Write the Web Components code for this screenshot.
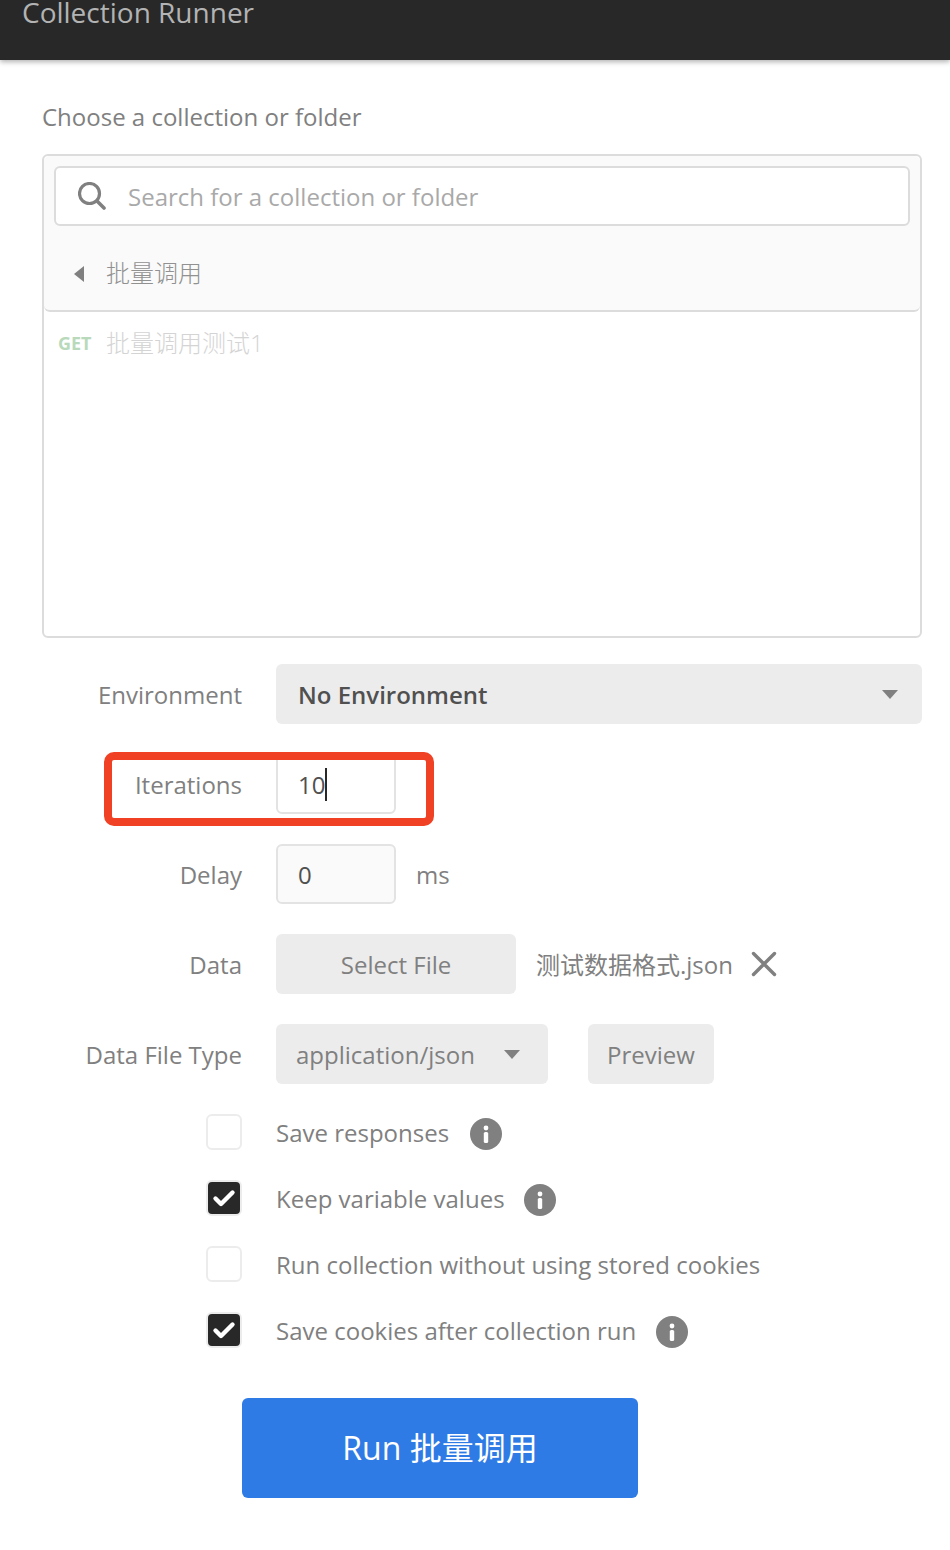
<!DOCTYPE html>
<html>
<head>
<meta charset="utf-8">
<title>Collection Runner</title>
<style>
  html, body { margin: 0; background: #fff; }
  body {
    font-family: 'Open Sans', 'Noto Sans CJK SC', sans-serif;
    font-size: 24px;
    color: #808080;
  }
  .content { display: block; padding: 0 28px 0 42px; }
</style>
</head>
<body>
<app-header>Collection Runner</app-header>
<div class="content">
  <collection-picker title-text="Choose a collection or folder" placeholder="Search for a collection or folder" folder="批量调用"></collection-picker>
  <runner-form></runner-form>
</div>

<script>
const INFO_ICON = `<svg width="32" height="32" viewBox="0 0 32 32"><circle cx="16" cy="16" r="16" fill="#808080"/><circle cx="16" cy="10" r="2.4" fill="#fff"/><rect x="13.8" y="14" width="4.4" height="11" rx="1.6" fill="#fff"/></svg>`;
const CHECK_ICON = `<svg width="24" height="24" viewBox="0 0 24 24"><path d="M3.5 12.5l5.5 5.5L20.5 6.5" fill="none" stroke="#fff" stroke-width="4.4" stroke-linecap="round" stroke-linejoin="round"/></svg>`;

class AppHeader extends HTMLElement {
  constructor() {
    super();
    const shadow = this.attachShadow({ mode: 'open' });
    shadow.innerHTML = `
      <style>
        :host {
          display: block;
          height: 60px;
          overflow: hidden;
          background: #282828;
          color: #b3b3b3;
          box-shadow: 0 2px 5px rgba(0, 0, 0, 0.3);
          position: relative;
          font-size: 28px;
          line-height: 24px;
          padding-left: 22px;
        }
      </style>
      <slot></slot>`;
  }
}
customElements.define('app-header', AppHeader);

class CollectionPicker extends HTMLElement {
  constructor() {
    super();
    const shadow = this.attachShadow({ mode: 'open' });
    shadow.innerHTML = `
      <style>
        :host { display: block; }
        .title { height: 34px; line-height: 34px; margin: 40px 0 20px; color: #808080; }
        .box {
          height: 480px;
          border: 2px solid #dcdcdc;
          border-radius: 6px;
        }
        .top {
          box-sizing: border-box;
          height: 156px;
          padding: 10px;
          background: #fafafa;
          border-bottom: 2px solid #dcdcdc;
          border-radius: 6px 6px 6px 6px;
        }
        .search {
          box-sizing: border-box;
          height: 60px;
          display: flex;
          align-items: center;
          gap: 22px;
          padding-left: 22px;
          background: #fff;
          border: 2px solid #dcdcdc;
          border-radius: 6px;
          color: #a9a9a9;
        }
        .folder {
          display: flex;
          align-items: center;
          height: 96px;
          padding-left: 20px;
          gap: 22px;
          color: #919191;
          font-weight: 300;
        }
        .folder-name { margin-bottom: 6px; }
        .arrow {
          width: 0; height: 0;
          border-style: solid;
          border-width: 8px 10px 8px 0;
          border-color: transparent #808080 transparent transparent;
        }
        .request {
          display: flex;
          align-items: center;
          height: 62px;
          padding-left: 14px;
          gap: 14px;
          color: #d4d4d4;
          font-weight: 300;
        }
        .request-name { margin-bottom: 4px; }
        .method { color: #b9d9bb; font-size: 18px; font-weight: 700; width: 34px; }
      </style>
      <div class="title"></div>
      <div class="box">
        <div class="top">
          <div class="search">
            <svg width="28" height="28" viewBox="0 0 28 28"><circle cx="11.5" cy="11.5" r="10" fill="none" stroke="#808080" stroke-width="3.2"/><path d="M19 19l7 7" stroke="#808080" stroke-width="3.6" stroke-linecap="round"/></svg>
            <span class="placeholder"></span>
          </div>
          <div class="folder"><span class="arrow"></span><span class="folder-name"></span></div>
        </div>
        <div class="request"><span class="method">GET</span><span class="request-name">批量调用测试1</span></div>
      </div>`;
    shadow.querySelector('.title').textContent = this.getAttribute('title-text');
    shadow.querySelector('.placeholder').textContent = this.getAttribute('placeholder');
    shadow.querySelector('.folder-name').textContent = this.getAttribute('folder');
  }
}
customElements.define('collection-picker', CollectionPicker);

class FormRow extends HTMLElement {
  constructor() {
    super();
    const shadow = this.attachShadow({ mode: 'open' });
    shadow.innerHTML = `
      <style>
        :host {
          display: grid;
          grid-template-columns: 200px 1fr;
          column-gap: 34px;
          align-items: center;
          min-height: 60px;
        }
        .label { text-align: right; color: #808080; }
        .control { display: flex; align-items: center; min-width: 0; }
      </style>
      <div class="label"></div>
      <div class="control"><slot></slot></div>`;
    shadow.querySelector('.label').textContent = this.getAttribute('label') || '';
  }
}
customElements.define('form-row', FormRow);

class CheckRow extends HTMLElement {
  constructor() {
    super();
    const shadow = this.attachShadow({ mode: 'open' });
    const checked = this.hasAttribute('checked');
    const info = this.getAttribute('info');
    shadow.innerHTML = `
      <style>
        :host {
          display: flex;
          align-items: center;
          height: 36px;
          margin-left: 164px;
          color: #808080;
        }
        .box {
          box-sizing: border-box;
          flex: none;
          width: 36px; height: 36px;
          margin-right: 34px;
          border: 2px solid #ececec;
          border-radius: 6px;
          display: flex;
          align-items: center;
          justify-content: center;
        }
        .box.on { background: #282828; }
        .info { display: flex; margin-top: 4px; }
      </style>
      <span class="box ${checked ? 'on' : ''}">${checked ? CHECK_ICON : ''}</span>
      <span><slot></slot></span>
      ${info ? `<span class="info" style="margin-left:${info}px">${INFO_ICON}</span>` : ''}`;
  }
}
customElements.define('check-row', CheckRow);

class RunnerForm extends HTMLElement {
  constructor() {
    super();
    const shadow = this.attachShadow({ mode: 'open' });
    shadow.innerHTML = `
      <style>
        :host { display: block; margin-top: 26px; }
        .fields { display: flex; flex-direction: column; gap: 30px; }
        .grey {
          box-sizing: border-box;
          height: 60px;
          display: flex;
          align-items: center;
          background: #ececec;
          border-radius: 6px;
          color: #808080;
        }
        .env { width: 646px; padding: 0 24px 0 22px; justify-content: space-between; color: #505050; font-weight: 600; }
        .caret { width: 0; height: 0; border-style: solid; border-width: 9px 8px 0 8px; border-color: #808080 transparent transparent transparent; }
        .input {
          box-sizing: border-box;
          width: 120px; height: 60px;
          display: flex;
          align-items: center;
          padding-left: 20px;
          border: 2px solid #e3e3e3;
          border-radius: 6px;
          background: #fafafa;
          color: #505050;
        }
        .input.focus { background: #fff; }
        .cursor { width: 2px; height: 33px; background: #282828; }
        .highlight-row { position: relative; }
        .highlight {
          position: absolute;
          left: -172px; top: -2px;
          box-sizing: border-box;
          width: 330px; height: 74px;
          border: 8px solid #f04124;
          border-radius: 10px;
          pointer-events: none;
        }
        .ms { margin-left: 20px; }
        .select-file { width: 240px; justify-content: center; }
        .file-name { margin: 0 0 2px 20px; white-space: nowrap; }
        .close { display: flex; margin-left: 18px; }
        .type { width: 272px; padding: 0 28px 0 20px; justify-content: space-between; }
        .preview { width: 126px; margin-left: 40px; justify-content: center; }
        .options { display: flex; flex-direction: column; gap: 30px; margin-top: 30px; }
        .run {
          box-sizing: border-box;
          display: flex;
          align-items: center;
          justify-content: center;
          width: 396px; height: 100px;
          margin: 50px 0 0 200px;
          padding-bottom: 4px;
          background: #2f7be6;
          border-radius: 6px;
          color: #fff;
          font-size: 32px;
        }
      </style>
      <div class="fields">
        <form-row label="Environment"><div class="grey env"><span>No Environment</span><span class="caret"></span></div></form-row>
        <form-row label="Iterations"><div class="highlight-row"><div class="input focus"><span>10</span><span class="cursor"></span></div><div class="highlight"></div></div></form-row>
        <form-row label="Delay"><div class="input">0</div><span class="ms">ms</span></form-row>
        <form-row label="Data">
          <div class="grey select-file">Select File</div>
          <span class="file-name">测试数据格式.json</span>
          <span class="close"><svg width="26" height="26" viewBox="0 0 26 26"><path d="M2.5 2.5l21 21M23.5 2.5l-21 21" stroke="#808080" stroke-width="3.4" stroke-linecap="round"/></svg></span>
        </form-row>
        <form-row label="Data File Type">
          <div class="grey type"><span>application/json</span><span class="caret"></span></div>
          <div class="grey preview">Preview</div>
        </form-row>
      </div>
      <div class="options">
        <check-row info="21">Save responses</check-row>
        <check-row checked info="19">Keep variable values</check-row>
        <check-row>Run collection without using stored cookies</check-row>
        <check-row checked info="20">Save cookies after collection run</check-row>
      </div>
      <div class="run">Run 批量调用</div>`;
  }
}
customElements.define('runner-form', RunnerForm);
</script>
</body>
</html>
